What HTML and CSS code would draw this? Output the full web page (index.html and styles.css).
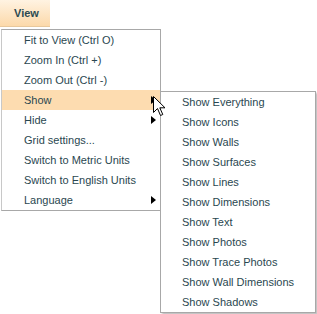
FILE: index.html
```html
<!DOCTYPE html>
<html lang="en">
  <head>
    <meta charset="UTF-8" />
    <title>View menu</title>
    <link rel="stylesheet" href="styles.css">
  </head>
  <body>
    <!-- Menu bar -->
    <div class="menubar">
      <div class="menu-title">View</div>
    </div>

    <!-- View menu -->
    <ul class="menu">
      <li class="menu-item">Fit to View (Ctrl O)</li>
      <li class="menu-item">Zoom In (Ctrl +)</li>
      <li class="menu-item">Zoom Out (Ctrl -)</li>
      <li class="menu-item has-sub active">
        Show
        <span class="arrow"></span>
        <!-- Show submenu -->
        <ul class="menu submenu">
          <li class="menu-item">Show Everything</li>
          <li class="menu-item">Show Icons</li>
          <li class="menu-item">Show Walls</li>
          <li class="menu-item">Show Surfaces</li>
          <li class="menu-item">Show Lines</li>
          <li class="menu-item">Show Dimensions</li>
          <li class="menu-item">Show Text</li>
          <li class="menu-item">Show Photos</li>
          <li class="menu-item">Show Trace Photos</li>
          <li class="menu-item">Show Wall Dimensions</li>
          <li class="menu-item">Show Shadows</li>
        </ul>
        <svg class="cursor" width="13" height="21" viewBox="0 0 13 21">
          <path d="M0.5 0.5 L0.5 16.5 L4.5 12.5 L7.5 19.5 L9.8 18.5 L6.8 11.8 L12 11.8 Z"
                fill="#fff" stroke="#000" stroke-width="1" stroke-linejoin="miter" />
        </svg>
      </li>
      <li class="menu-item has-sub">Hide <span class="arrow"></span></li>
      <li class="menu-item">Grid settings...</li>
      <li class="menu-item">Switch to Metric Units</li>
      <li class="menu-item">Switch to English Units</li>
      <li class="menu-item has-sub">Language <span class="arrow"></span></li>
    </ul>
  </body>
</html>
```

FILE: styles.css
```css
body {
  margin: 0;
  padding: 0;
  height: 314px;
  background-color: #fff;
  font-family: "Liberation Sans", Arial, sans-serif;
  font-size: 11px;
  color: #2a4750;
}

.menubar {
  display: flex;
  height: 28px;
  border-bottom: 1px solid #fff;
}

.menu-title {
  width: 50px;
  height: 27px;
  line-height: 27px;
  padding-left: 14px;
  box-sizing: border-box;
  font-weight: bold;
  color: #2c4a52;
  background: linear-gradient(#fff3e2, #fcd9aa);
  border-bottom: 1px solid #e8c89c;
}

.menu {
  list-style: none;
  margin: 0 0 0 1px;
  padding: 0;
  width: 160px;
  box-sizing: border-box;
  background-color: #fff;
  border: 1px solid #a8a8a8;
  border-left-color: #c8c8c8;
  position: relative;
}

.menu-item {
  height: 20px;
  line-height: 20px;
  padding-left: 22px;
  position: relative;
  white-space: nowrap;
}

.menu-item.active {
  background-color: #fddcb0;
}

.arrow {
  position: absolute;
  left: 149px;
  top: 6px;
  width: 0;
  height: 0;
  border-top: 4px solid transparent;
  border-bottom: 4px solid transparent;
  border-left: 5px solid #000;
}

/* Submenu opens to the right of "Show" */
.submenu {
  position: absolute;
  left: 158px;
  top: 1px;
  margin: 0;
  width: 156px;
  border-color: #a8a8a8;
  box-shadow: 2px 2px 2px rgba(0, 0, 0, 0.25);
  z-index: 2;
  color: #2a4750;
}

.submenu .menu-item {
  padding-left: 21px;
}

.cursor {
  position: absolute;
  left: 151px;
  top: 6px;
  z-index: 3;
}
```
